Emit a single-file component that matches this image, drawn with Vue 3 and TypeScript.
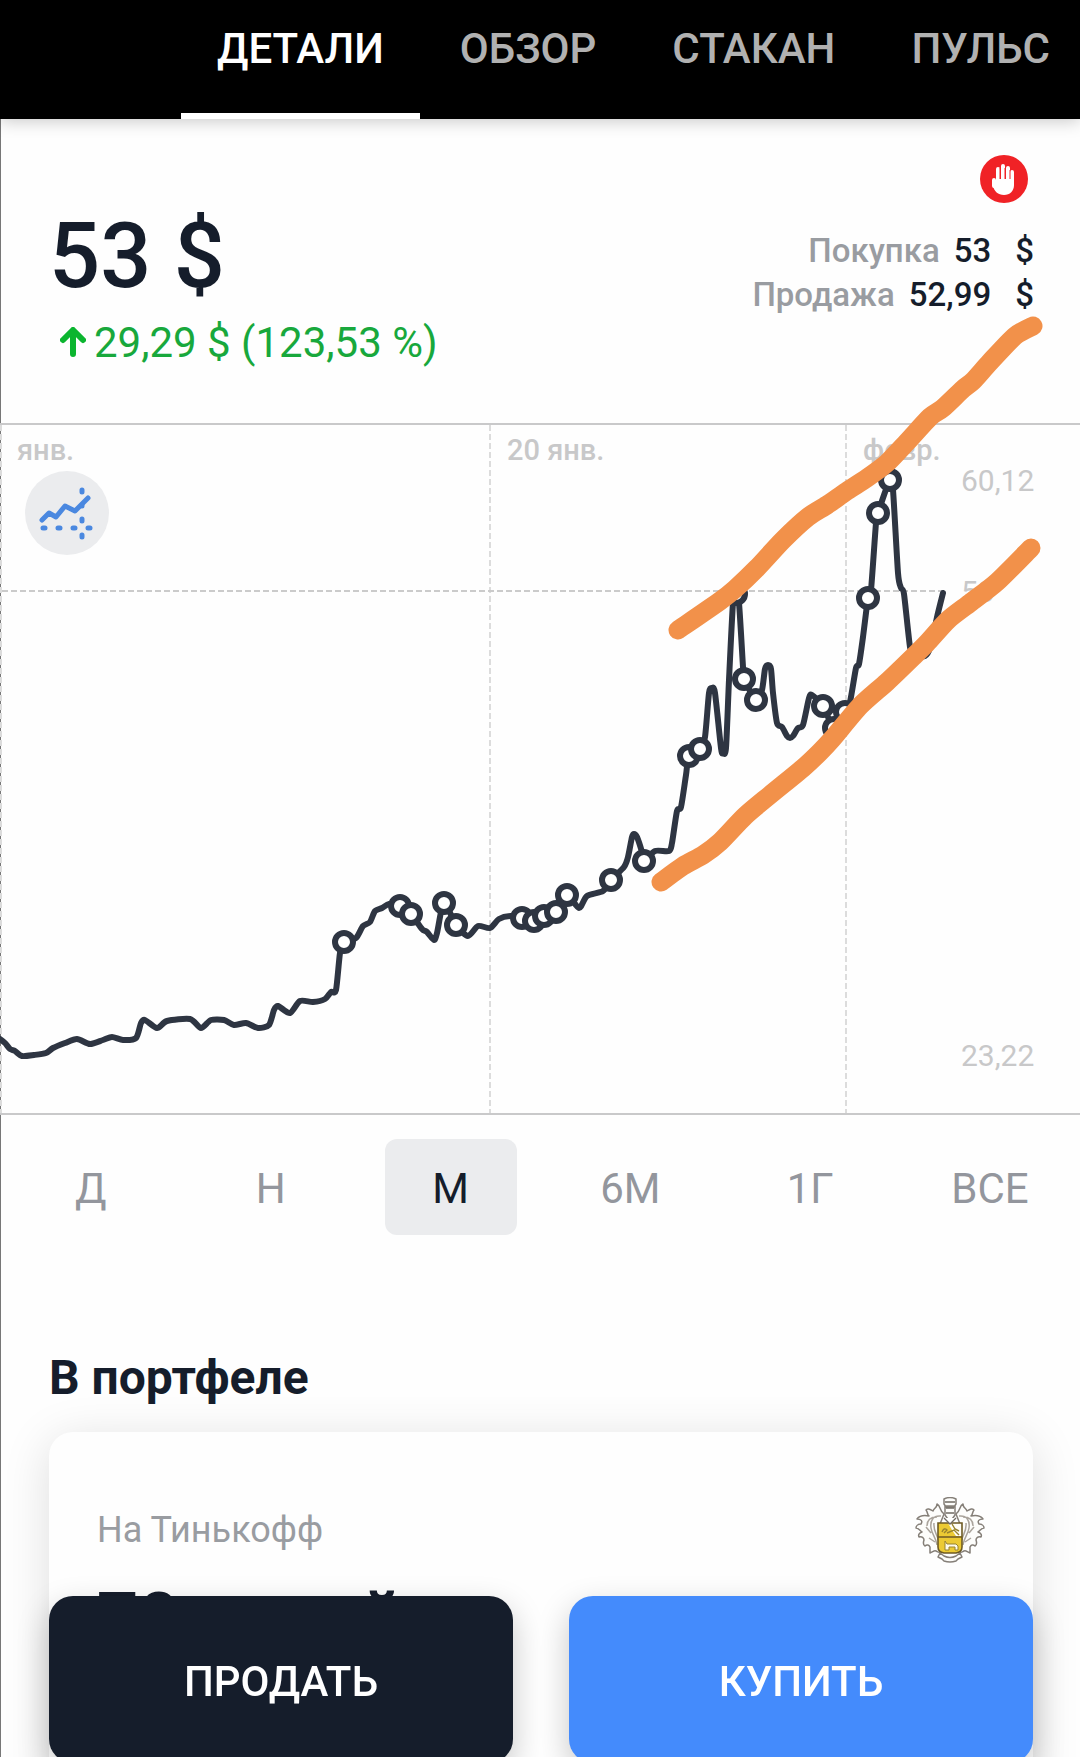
<script setup lang="ts">
import { computed, ref } from 'vue'

type Point = [number, number]

const tabs = ['ДЕТАЛИ', 'ОБЗОР', 'СТАКАН', 'ПУЛЬС']
const activeTab = ref('ДЕТАЛИ')

const periods = ['Д', 'Н', 'М', '6М', '1Г', 'ВСЕ']
const activePeriod = ref('М')

const quotes = [
  { label: 'Покупка', value: '53' },
  { label: 'Продажа', value: '52,99' },
]

const dates = [
  { x: 17, text: 'янв.' },
  { x: 507, text: '20 янв.' },
  { x: 863, text: 'февр.' },
]

const levels = [
  { y: 491, text: '60,12' },
  { y: 602, text: '53' },
  { y: 1066, text: '23,22' },
]

const price: Point[] = [
  [0, 1039], [5, 1043], [10, 1049], [15, 1051], [22, 1056], [34, 1055], [46, 1053], [53, 1048],
  [65, 1043], [77, 1039], [90, 1044], [103, 1040], [112, 1037], [123, 1040], [136, 1038],
  [141, 1023], [145, 1020], [157, 1028], [167, 1021], [190, 1019], [201, 1028], [211, 1020],
  [224, 1020], [234, 1025], [246, 1023], [258, 1028], [269, 1025], [274, 1010], [278, 1006],
  [290, 1013], [300, 1001], [313, 1002], [325, 999], [331, 992], [336, 990], [340, 953],
  [344, 942], [356, 938], [363, 926], [370, 922], [375, 911], [382, 908], [389, 904],
  [400, 906], [411, 914], [422, 929], [427, 932], [434, 940], [437, 933], [444, 903],
  [456, 925], [468, 936], [478, 926], [490, 928], [499, 919], [511, 916], [522, 918],
  [534, 921], [544, 916], [556, 912], [567, 895], [579, 908], [587, 896], [603, 891],
  [611, 880], [624, 867], [628, 857], [632, 837], [634, 834], [637, 837], [642, 852],
  [644, 861], [655, 851], [669, 851], [672, 843], [677, 811], [681, 807], [686, 775],
  [689, 756], [700, 749], [705, 737], [709, 693], [712, 688], [715, 693], [721, 748],
  [723, 753], [726, 748], [729, 680], [733, 603], [736, 594], [739, 603], [743, 667],
  [744, 679], [756, 700], [762, 690], [765, 669], [768, 665], [771, 669], [773, 693],
  [777, 723], [782, 727], [787, 736], [790, 738], [793, 736], [798, 728], [803, 725],
  [809, 698], [812, 695], [823, 706], [834, 728], [845, 712], [850, 702], [856, 668],
  [859, 664], [863, 637], [868, 598], [871, 590], [876, 523], [878, 513], [890, 480],
  [893, 490], [898, 573], [901, 588], [904, 594], [910, 647], [914, 655], [925, 656],
  [930, 648], [938, 613], [943, 593],
]

const deals: Point[] = [
  [344, 942], [400, 906], [411, 914], [444, 903], [456, 925], [522, 918], [534, 921],
  [544, 916], [556, 912], [567, 895], [611, 880], [644, 861], [689, 756], [700, 749],
  [736, 594], [744, 679], [756, 700], [834, 728], [845, 712], [823, 706], [868, 598],
  [878, 513], [890, 480],
]

const upperTrend: Point[] = [
  [678, 630], [720, 601], [735, 589], [757, 568], [783, 540], [808, 517], [827, 505],
  [847, 491], [867, 478], [887, 463], [907, 442], [930, 417], [943, 408], [963, 389],
  [973, 381], [990, 362], [1015, 336], [1033, 326],
]

const lowerTrend: Point[] = [
  [661, 882], [683, 866], [703, 855], [720, 842], [745, 816], [770, 795], [803, 768],
  [820, 752], [833, 738], [860, 706], [887, 682], [913, 657], [927, 643], [948, 620],
  [970, 603], [997, 582], [1031, 548],
]

/* Joins the points with a softly rounded cubic curve. */
function smooth(points: Point[]): string {
  const k = 8
  return points.reduce((path, p, i) => {
    if (i === 0) return `M${p[0]} ${p[1]}`
    const before = points[Math.max(i - 2, 0)]
    const from = points[i - 1]
    const after = points[Math.min(i + 1, points.length - 1)]
    const c1 = `${from[0] + (p[0] - before[0]) / k} ${from[1] + (p[1] - before[1]) / k}`
    const c2 = `${p[0] - (after[0] - from[0]) / k} ${p[1] - (after[1] - from[1]) / k}`
    return `${path}C${c1} ${c2} ${p[0]} ${p[1]}`
  }, '')
}

const pricePath = computed(() => smooth(price))
const trendPaths = computed(() => [upperTrend, lowerTrend].map(smooth))
</script>

<template>
  <div class="app">
    <header class="header">
      <nav class="tabs">
        <button
          v-for="tab in tabs"
          :key="tab"
          type="button"
          class="tab"
          :class="{ active: tab === activeTab }"
          @click="activeTab = tab"
        >{{ tab }}</button>
      </nav>
    </header>

    <main class="content">
      <section class="summary">
        <div class="current">
          <p class="price">53 $</p>
          <p class="change">
            <svg class="arrow" viewBox="0 0 26 32" aria-hidden="true">
              <path d="M13 27V4M3 13L13 3l10 10" />
            </svg>
            <span>29,29 $ (123,53 %)</span>
          </p>
        </div>
        <div class="side">
          <svg class="halt" viewBox="0 0 48 48" aria-hidden="true">
            <circle cx="24" cy="24" r="24" fill="#f02226" />
            <g fill="none" stroke="#fff" stroke-width="4" stroke-linecap="round">
              <path d="M18 14v14M23 11v16M28 13v14M32 17v12M14 25v6" />
            </g>
            <path
              d="M12 26c3-2 4 2 6 2V24h16v6c0 6-4 10-10 10s-10-4-11-9z"
              fill="#fff"
            />
            <path d="M20 13v11M25 13v11M30 15v9" fill="none" stroke="#f02226" />
          </svg>
          <dl class="quotes">
            <div v-for="quote in quotes" :key="quote.label" class="quote">
              <dt>{{ quote.label }}</dt>
              <dd>{{ quote.value }}</dd>
              <dd class="currency">$</dd>
            </div>
          </dl>
        </div>
      </section>

      <section class="chart">
        <svg class="plot" viewBox="1 423 1079 692" role="img" aria-label="График цены за месяц">
          <g class="frame">
            <path d="M0 424H1080M0 1114H1080" />
          </g>
          <g class="grid">
            <path d="M1 425V1113M490 425V1113M846 425V1113" />
            <path class="now" d="M2 591H944" />
          </g>
          <g class="dates">
            <text v-for="date in dates" :key="date.text" :x="date.x" y="460">{{ date.text }}</text>
          </g>
          <g class="levels">
            <text v-for="level in levels" :key="level.text" x="961" :y="level.y">{{ level.text }}</text>
          </g>
          <path class="line" :d="pricePath" />
          <circle
            v-for="(deal, i) in deals"
            :key="i"
            class="deal"
            :cx="deal[0]"
            :cy="deal[1]"
            r="9"
          />
          <path v-for="(trend, i) in trendPaths" :key="i" class="trend" :d="trend" />
        </svg>
        <button type="button" class="tool" aria-label="Вид графика">
          <svg viewBox="0 0 84 84" aria-hidden="true">
            <path d="M17 49l7-7 7 4 9-11 10 5 13-13" />
            <path d="M18 57h2M33 57h2M48 57h2M63 57h2M57 19v2M57 34v1M57 48v2M57 64v2" />
          </svg>
        </button>
      </section>

      <div class="periods">
        <button
          v-for="period in periods"
          :key="period"
          type="button"
          class="period"
          :class="{ active: period === activePeriod }"
          @click="activePeriod = period"
        >{{ period }}</button>
      </div>

      <section class="portfolio">
        <h2>В портфеле</h2>
        <article class="card">
          <div class="account">
            <span>На Тинькофф</span>
            <svg class="crest" viewBox="0 0 70 66" aria-hidden="true">
              <g fill="#fdfdfb" stroke="#857f78" stroke-width="1.5" stroke-linejoin="round">
                <path
                  d="M29 17C24 13 26 9 22 7c0 4-3 4-4 7-3-2-6-3-7-1 2 2 1 5 3 6-5-1-9-1-12 3 4 0 6 2 4 5-3 0-5 2-5 4 3 0 4 3 6 4-3 1-4 3-3 5 3-1 5 1 5 3-1 3-1 5 1 6 2-2 4-1 5 1v6c3-1 4-3 6-2 2 1 3 2 4 1V27z"
                />
                <path
                  d="M41 17c5-4 3-8 7-10 0 4 3 4 4 7 3-2 6-3 7-1-2 2-1 5-3 6 5-1 9-1 12 3-4 0-6 2-4 5 3 0 5 2 5 4-3 0-4 3-6 4 3 1 4 3 3 5-3-1-5 1-5 3 1 3 1 5-1 6-2-2-4-1-5 1v6c-3-1-4-3-6-2-2 1-3 2-4 1V27z"
                />
                <path d="M25 56l4 3q6 3 12 0l4-3 2 4-4 2-2 2q-6 2-12 0l-2-2-4-2z" />
                <path d="M29 2q6-3 12 0v5l-2 3H31l-2-3zM30 9h10v9l-5 7-5-7z" />
              </g>
              <g fill="none" stroke="#aaa49c" stroke-width="1.5">
                <path d="M26 19c-8-1-11 5-10 12s5 9 6 17M22 20c-8 0-10 5-10 9M19 26c-1 9 4 12 4 17M11 30l5 6M14 41l6 4" />
                <path d="M44 19c8-1 11 5 10 12s-5 9-6 17M48 20c8 0 10 5 10 9M51 26c1 9-4 12-4 17M59 30l-5 6M56 41l-6 4" />
              </g>
              <path d="M30 5h10M31 11h8M31 16h8" stroke="#6f6a63" stroke-width="1.6" />
              <path d="M23 26h24v24q0 5-6 6H29q-6-1-6-6z" fill="#ecca33" />
              <path d="M33 26h14v13H41l-4-6z" fill="#fffdf6" />
              <path d="M27 35q2-5 5-2l-3 3M32 36l7-3 5 5M37 27l3 5 4 2" fill="none" stroke="#97832e" stroke-width="1.4" />
              <path d="M30 44l2 3h9l2 2v4h-3v-3h-6v3h-4z" fill="#fffbe8" stroke="#97832e" />
              <path d="M23 26h24v24q0 5-6 6H29q-6-1-6-6zM23 40h24" fill="none" stroke="#6d5a24" stroke-width="1.6" />
              <path d="M29 21l6 6 6-6" fill="#fff" stroke="#6f6a63" stroke-width="1.3" />
            </svg>
          </div>
          <p class="amount">70 акций</p>
        </article>
      </section>
    </main>

    <footer class="actions">
      <button type="button" class="action sell">ПРОДАТЬ</button>
      <button type="button" class="action buy">КУПИТЬ</button>
    </footer>
  </div>
</template>

<style>
body {
  margin: 0;
  background: #fefefe;
}
</style>

<style scoped>
.app {
  display: flex;
  flex-direction: column;
  height: 100vh;
  overflow: hidden;
  font-family: Roboto, 'Noto Sans', sans-serif;
  color: #151d2b;
}

button {
  margin: 0;
  border: 0;
  background: none;
  font: inherit;
  color: inherit;
  cursor: pointer;
}

p,
h2,
dl,
dd {
  margin: 0;
}

.header {
  flex: none;
  padding-left: 181px;
  background: #000;
  box-shadow: 0 2px 16px rgba(0, 0, 0, 0.22);
  z-index: 1;
}

.tabs {
  display: flex;
  gap: 4px;
}

.tab {
  box-sizing: border-box;
  height: 119px;
  padding: 0 36px 16px;
  border-bottom: 6px solid transparent;
  font-size: 42px;
  font-weight: 500;
  line-height: 48px;
  color: #b1b1b1;
}

.tab.active {
  border-color: #fff;
  color: #fff;
}

.content {
  flex: 1 0 auto;
  border-left: 1px solid #777;
}

.summary {
  display: flex;
  justify-content: space-between;
  box-sizing: border-box;
  height: 304px;
  padding: 36px 46px 0 48px;
}

.current {
  padding-top: 50px;
}

.price {
  font-size: 90px;
  font-weight: 500;
  line-height: 104px;
}

.change {
  display: flex;
  align-items: center;
  gap: 8px;
  padding-left: 11px;
  font-size: 42px;
  line-height: 68px;
  color: #18a83c;
}

.arrow {
  width: 26px;
  height: 32px;
  fill: none;
  stroke: #0bb52f;
  stroke-width: 6;
  stroke-linecap: round;
  stroke-linejoin: round;
}

.side {
  display: flex;
  flex-direction: column;
  align-items: flex-end;
  gap: 26px;
}

.halt {
  width: 48px;
  height: 48px;
  margin-right: 6px;
}

.quote {
  display: flex;
  justify-content: flex-end;
  gap: 14px;
  font-size: 33px;
  font-weight: 500;
  line-height: 44px;
}

.quote dt {
  color: #999ca1;
}

.currency {
  padding-left: 10px;
}

.chart {
  position: relative;
}

.plot {
  display: block;
  width: 100%;
  height: auto;
  overflow: visible;
}

.frame {
  stroke: #c9c9ca;
  stroke-width: 2;
}

.grid {
  fill: none;
  stroke: #dcdcdc;
  stroke-width: 2;
  stroke-dasharray: 6 3;
}

.now {
  stroke: #cbcbcb;
}

.dates,
.levels {
  fill: #c8c8c9;
}

.dates {
  font-size: 29px;
  font-weight: 500;
}

.levels {
  font-size: 30px;
}

.line {
  fill: none;
  stroke: #2e3542;
  stroke-width: 6;
  stroke-linecap: round;
  stroke-linejoin: round;
}

.deal {
  fill: #fff;
  stroke: #2e3542;
  stroke-width: 6;
}

.trend {
  fill: none;
  stroke: #f2914a;
  stroke-width: 19;
  stroke-linecap: round;
  stroke-linejoin: round;
}

.tool {
  position: absolute;
  top: 48px;
  left: 24px;
  width: 84px;
  height: 84px;
  padding: 0;
  border-radius: 50%;
  background: #ebecee;
}

.tool svg {
  display: block;
  fill: none;
  stroke: #4a88e0;
  stroke-width: 5;
  stroke-linecap: round;
  stroke-linejoin: round;
}

.periods {
  display: grid;
  grid-template-columns: repeat(6, 1fr);
  justify-items: center;
  padding-top: 24px;
}

.period {
  width: 132px;
  height: 96px;
  padding: 4px 0 0;
  border-radius: 12px;
  font-size: 42px;
  line-height: 48px;
  color: #93969d;
}

.period.active {
  background: #ebecee;
  color: #151d2b;
}

.portfolio {
  padding: 115px 47px 0 48px;
}

h2 {
  font-size: 48px;
  font-weight: 700;
  line-height: 56px;
}

.card {
  margin-top: 26px;
  height: 480px;
  padding: 65px 48px;
  border-radius: 24px;
  background: #fefefe;
  box-shadow: 0 8px 48px rgba(0, 0, 0, 0.13);
}

.account {
  display: flex;
  align-items: center;
  justify-content: space-between;
  font-size: 36px;
  line-height: 66px;
  color: #999ca1;
}

.crest {
  width: 70px;
  height: 66px;
}

.amount {
  padding-top: 15px;
  font-size: 72px;
  font-weight: 700;
  line-height: 84px;
}

.actions {
  position: fixed;
  right: 47px;
  bottom: -6px;
  left: 49px;
  display: flex;
  gap: 56px;
  z-index: 2;
}

.action {
  flex: 1;
  height: 167px;
  padding: 4px 0 0;
  border-radius: 24px;
  font-size: 42px;
  font-weight: 500;
  color: #fff;
  box-shadow: 0 12px 32px rgba(0, 0, 0, 0.22);
}

.sell {
  background: #151d2b;
}

.buy {
  background: #448bfc;
}
</style>
